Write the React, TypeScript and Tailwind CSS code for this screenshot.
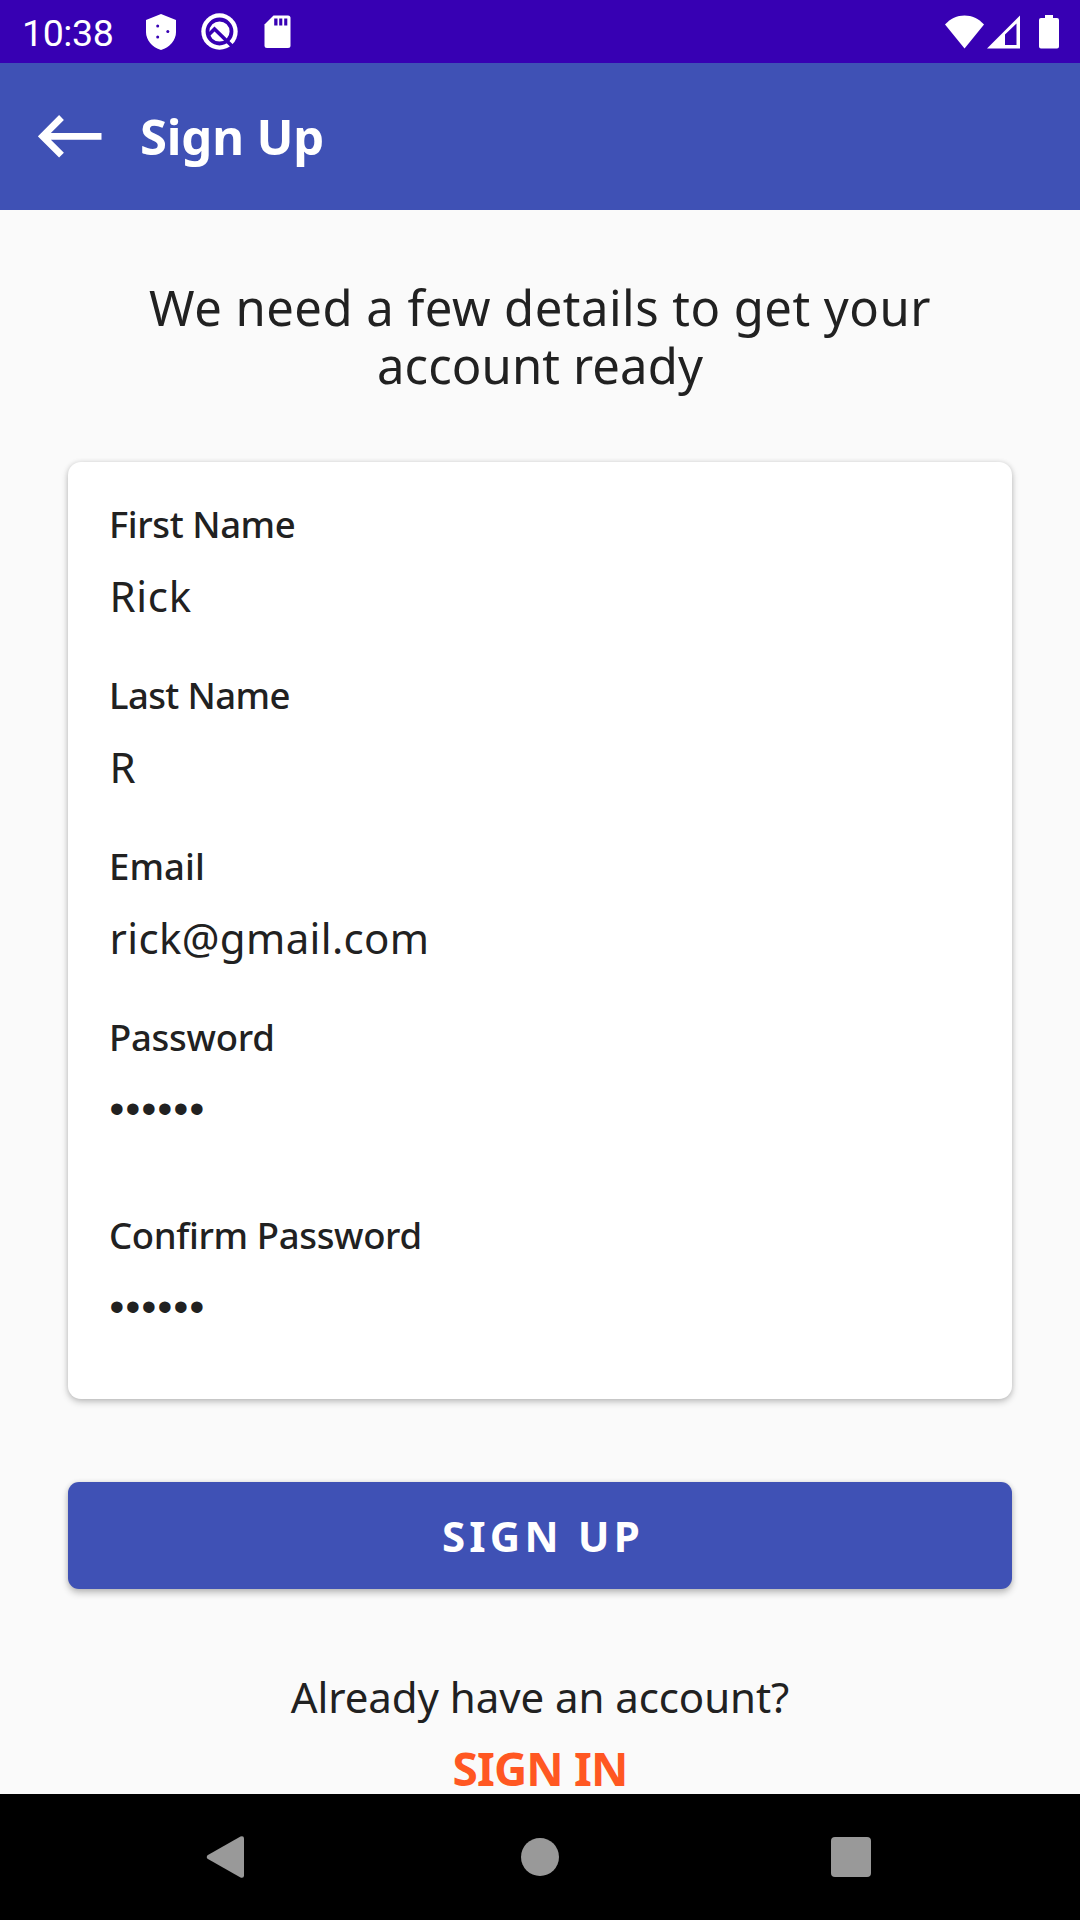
import React from 'react';

function StatusBar() {
  return (
    <div className="flex h-[63px] shrink-0 items-center justify-between bg-[#3700b3] pl-[22px] pr-[21px] text-white">
      <div className="flex items-center">
        <span className="w-[124px] pt-[3px] font-[Roboto,sans-serif] text-[37.5px] leading-[44px] tracking-[-0.4px]">10:38</span>
        <svg className="h-[36px] w-[30px]" viewBox="0 0 30 36" fill="currentColor">
          <path d="M15 0 30 6v12c0 8-6 15.500-15 18C6 33.500 0 26 0 18V6z" />
          <g fill="#3700b3">
            <circle cx="11.700" cy="12" r="1.500" />
            <circle cx="21.800" cy="17.500" r="1.500" />
            <circle cx="11.700" cy="23" r="1.500" />
          </g>
        </svg>
        <svg className="ml-[24.500px] h-[37px] w-[37px]" viewBox="0 0 37 37">
          <circle cx="18.500" cy="18.500" r="18.200" fill="currentColor" />
          <circle cx="18.500" cy="18.500" r="12" fill="none" stroke="#3700b3" strokeWidth="3.800" />
          <path d="M7 22.500 13.500 16 31 33" fill="none" stroke="#3700b3" strokeWidth="3.600" />
        </svg>
        <svg className="ml-[26px] h-[34px] w-[27px]" viewBox="0 0 27 34">
          <path d="M9.500 .5H24a2.500 2.500 0 0 1 2.500 2.500v27.500a2.500 2.500 0 0 1-2.500 2.500H3a2.500 2.500 0 0 1-2.500-2.500V9.500z" fill="currentColor" />
          <path d="M10.200 3.500h3.300v7h-3.300zM15.200 3.500h3.100v7h-3.100zM20.200 3.500h3.100v7h-3.100z" fill="#3700b3" />
        </svg>
      </div>
      <div className="flex items-center">
        <svg className="h-[34px] w-[39px]" viewBox="0 0 39 34" fill="currentColor">
          <path d="M0 9.500C5.500 3.500 12 .5 19.500 .5S33.500 3.500 39 9.500L19.500 33.500z" />
        </svg>
        <svg className="ml-[3px] h-[34px] w-[33px]" viewBox="0 0 33 34" fill="currentColor" fillRule="evenodd">
          <path d="M0 33.500 33 .5v33zM18 19.500V30h11.500V8.500z" />
        </svg>
        <svg className="ml-[19px] h-[34px] w-[20px]" viewBox="0 0 20 34" fill="currentColor">
          <path d="M6 0h8v3h4a2 2 0 0 1 2 2v26.500a2 2 0 0 1-2 2H2a2 2 0 0 1-2-2V5a2 2 0 0 1 2-2h4z" />
        </svg>
      </div>
    </div>
  );
}

function Header() {
  return (
    <header className="flex h-[147px] shrink-0 items-center bg-[#3f51b5] pl-[38px] text-white">
      <svg className="h-[43px] w-[64px]" viewBox="0 0 64 43" fill="none" stroke="currentColor" strokeWidth="6.800">
        <path d="M23.500 2.500 4.700 21.300 23.500 40.100M6 21.300H63.500" />
      </svg>
      <h1 className="ml-[38px] pb-[2px] text-[49px] font-bold leading-[58px] tracking-[-0.15px]">Sign Up</h1>
    </header>
  );
}

function Field({ label, value, labelClass, valueClass, className }: { label: string; value: string; labelClass: string; valueClass: string; className?: string }) {
  return (
    <div className={className}>
      <div className={`h-[46px] text-[36.5px] font-medium leading-[46px] ${labelClass}`}>{label}</div>
      <div className={`mt-[23px] h-[52px] pl-[0.5px] leading-[52px] ${valueClass}`}>{value}</div>
    </div>
  );
}

function NavBar() {
  return (
    <nav className="flex h-[126px] shrink-0 items-center justify-between bg-black pl-[206px] pr-[209px] text-[#999999]">
      <svg className="h-[42px] w-[38px]" viewBox="0 0 38 42" fill="currentColor">
        <path d="M1.500 19.200 34.500 .4Q38 -.6 38 2.500V39.500Q38 42.600 34.500 41.600L1.500 22.800Q0 21 1.500 19.200z" />
      </svg>
      <div className="ml-[4px] size-[38px] rounded-full bg-current" />
      <div className="size-[40px] rounded-[4px] bg-current" />
    </nav>
  );
}

export default function App() {
  return (
    <div className="flex h-[1920px] w-[1080px] flex-col overflow-hidden bg-[#fafafa] font-['Noto_Sans',sans-serif] text-[#212121]">
      <StatusBar />
      <Header />
      <main className="flex h-[1584px] shrink-0 flex-col overflow-hidden px-[68px] pt-[68px]">
        <h2 className="text-center text-[49px] leading-[58px]">
          <span className="block tracking-[0.47px]">We need a few details to get your</span>
          <span className="block tracking-[0.1px]">account ready</span>
        </h2>

        <section className="mt-[68px] h-[937px] shrink-0 rounded-[13px] bg-white pl-[41px] pt-[39px] shadow-[0_3px_7px_rgba(0,0,0,0.22),0_0_5px_rgba(0,0,0,0.1)]">
          <Field label="First Name" value="Rick" labelClass="tracking-[-0.42px]" valueClass="text-[42px] tracking-[0.7px]" />
          <Field label="Last Name" value="R" className="mt-[50px]" labelClass="tracking-[-0.6px]" valueClass="text-[42px]" />
          <Field label="Email" value="rick@gmail.com" className="mt-[50px]" labelClass="tracking-[0.1px]" valueClass="text-[42px] tracking-[0.36px]" />
          <Field label="Password" value="••••••" className="mt-[50px]" labelClass="tracking-[-0.26px]" valueClass="font-['Liberation_Sans',sans-serif] text-[42px] tracking-[1.3px]" />
          <Field label="Confirm Password" value="••••••" className="mt-[77px]" labelClass="tracking-[-0.36px]" valueClass="font-['Liberation_Sans',sans-serif] text-[42px] tracking-[1.3px]" />
        </section>

        <button className="mt-[83px] h-[107px] shrink-0 rounded-[11px] bg-[#3f51b5] pl-[6px] text-[42px] font-bold leading-[52px] tracking-[4.2px] text-white shadow-[0_4px_7px_rgba(0,0,0,0.24),0_0_5px_rgba(0,0,0,0.1)]">
          SIGN UP
        </button>

        <p className="mt-[82px] h-[52px] shrink-0 text-center text-[42px] leading-[52px] tracking-[-0.07px]">Already have an account?</p>
        <a className="mt-[19px] h-[52px] shrink-0 text-center text-[46px] font-bold leading-[52px] tracking-[-0.88px] text-[#ff5722]">SIGN IN</a>
      </main>
      <NavBar />
    </div>
  );
}
